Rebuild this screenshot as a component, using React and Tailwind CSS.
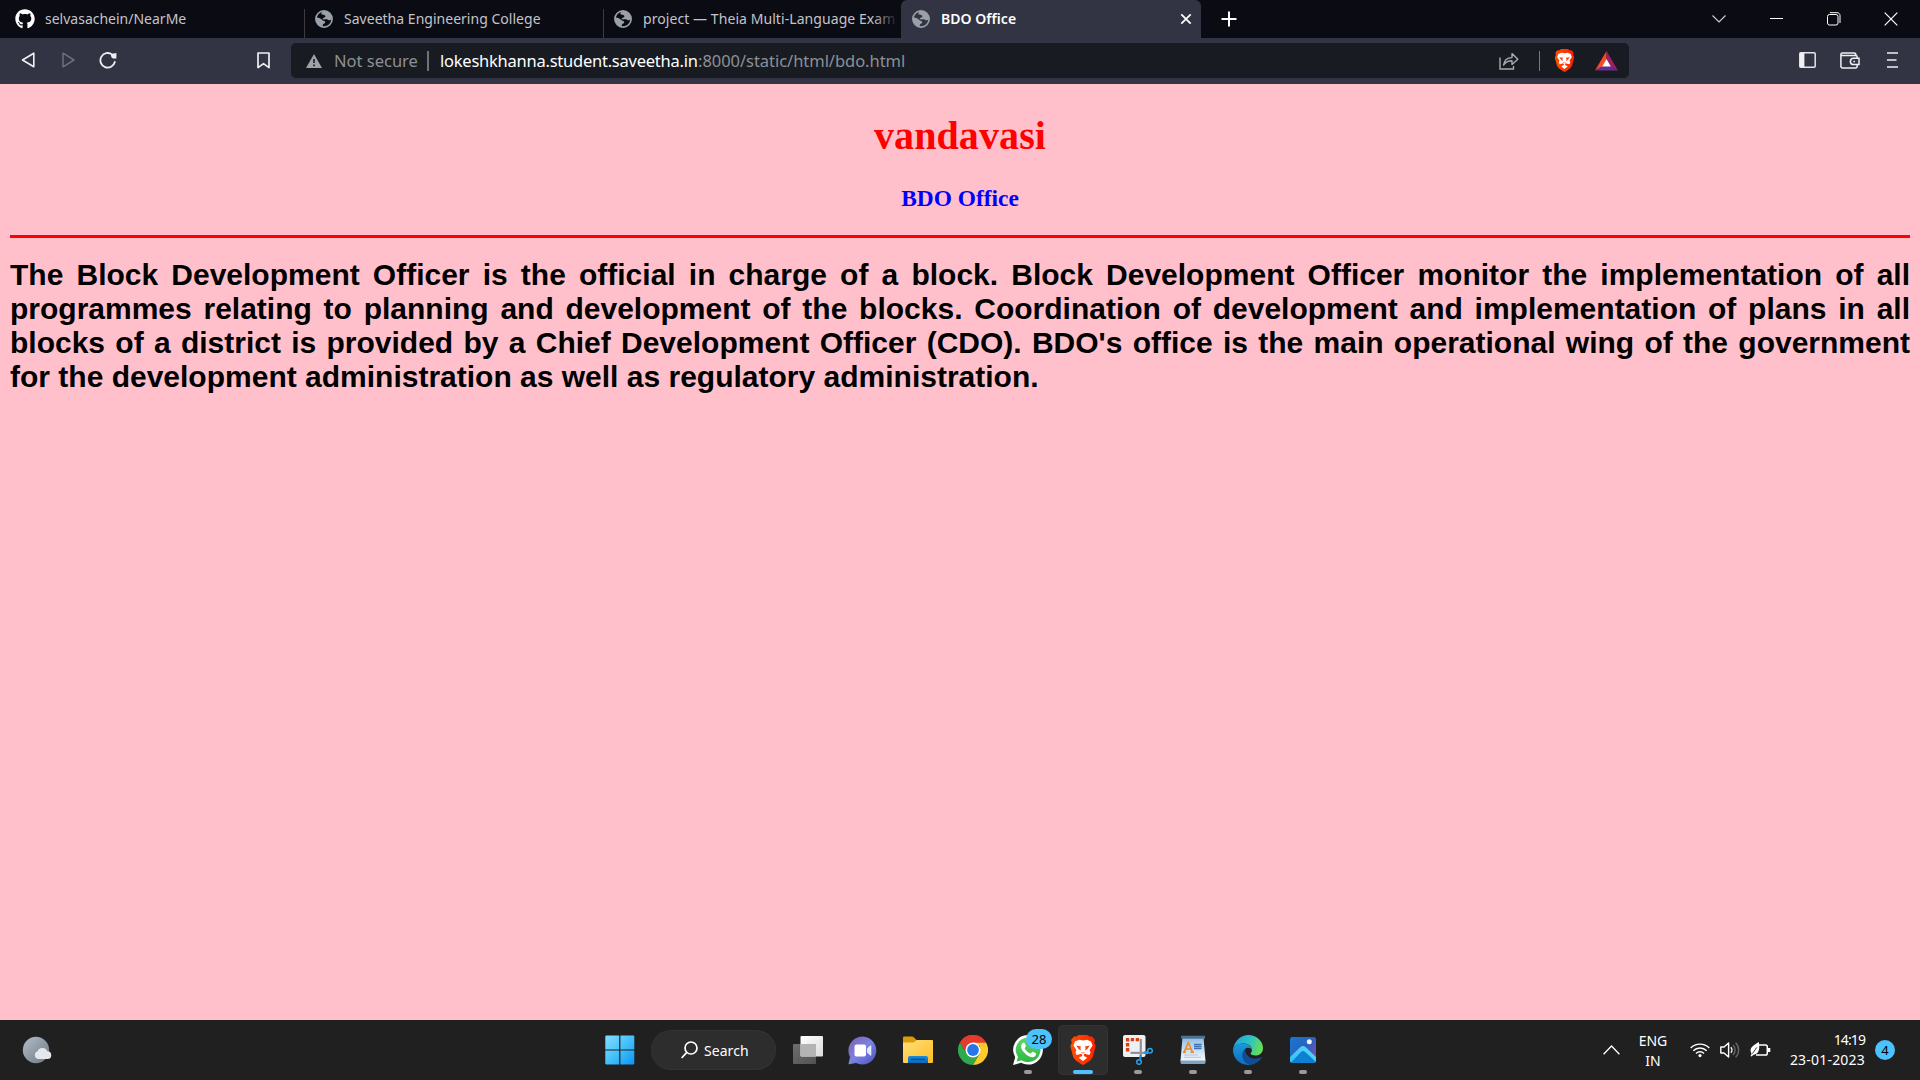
import React from "react";
import { FaGithub } from "react-icons/fa";

function Globe() {
  return (
    <svg width="18" height="18" viewBox="0 0 18 18" className="block shrink-0">
      <circle cx="9" cy="9" r="8.1" fill="none" stroke="#9aa0a8" strokeWidth="1.7" />
      <path d="M9 1 C6.5 2 5.6 3.4 6.8 4.6 C8 5.5 9.9 4.6 10.4 6.1 C10.9 7.6 8 7.4 7.6 9 C8.6 10.2 11.4 8.6 12.6 9.6 C13.4 10.8 15.6 10.4 17 9 C17.1 4 14 1 9 1 Z" fill="#9aa0a8" />
      <path d="M1 7.6 C3 7.2 5 8.4 6.8 9.4 C8 10.6 8.8 10.8 9.8 11.2 C11 12.2 9.8 13.4 8.6 13.8 C7.4 14.6 8 16.2 7.4 17 C3.8 16.4 .8 13 1 7.6 Z" fill="#9aa0a8" />
    </svg>
  );
}

function Tab({ icon, label, className, labelClass }) {
  return (
    <div className={"flex h-[29px] items-center pb-[9px] " + className}>
      {icon}
      <span className={"text-[14px] leading-5 whitespace-nowrap " + labelClass}>{label}</span>
    </div>
  );
}

function BraveLion({ width, height, id }) {
  return (
    <svg width={width} height={height} viewBox="0 0 26 30">
      <defs>
        <linearGradient id={id} x1="0" x2="1">
          <stop offset="0" stopColor="#ff5000" />
          <stop offset="1" stopColor="#ff2000" />
        </linearGradient>
      </defs>
      <path d="M6.5 1.6 L8.5 0 H17.5 L19.5 1.6 L22 1.5 L25 5 L24.2 7.4 L25.7 11 L22.8 22 L20.5 25.2 L13.8 29.8 H12.2 L5.5 25.2 L3.2 22 L.3 11 L1.8 7.4 L1 5 L4 1.5Z" fill={`url(#${id})`} />
      <path d="M9 4.8 L13 5.5 L17 4.8 L21 6.5 L22.6 10.4 L19.6 15 L20.6 17.5 L19.4 20 L16.4 19.2 L15 18.7 L13.8 19.4 V21 L17 22.4 L16.4 23.6 L13 26 L9.6 23.6 L9 22.4 L12.2 21 V19.4 L11 18.7 L9.6 19.2 L6.6 20 L5.4 17.5 L6.4 15 L3.4 10.4 L5 6.5Z" fill="#fff" />
      <path d="M6.2 10.6 L11 11.4 L10.4 13 L10.9 15.6 L8.8 14.2Z M19.8 10.6 L15 11.4 L15.6 13 L15.1 15.6 L17.2 14.2Z M10.8 16.8 L13 17.8 L15.2 16.8 L14 18.3 H12Z" fill="#fb3f0a" />
    </svg>
  );
}

function TaskItem({ children, active, open }) {
  return (
    <div className={"relative flex h-[50px] w-[50px] items-center justify-center rounded-[5px] " + (active ? "bg-[#2d2d2d] ring-1 ring-[#333] ring-inset" : "")}>
      {children}
      {open && <span className={"absolute bottom-[1px] h-1 rounded-full " + (active ? "w-5 bg-[#4cc2ff]" : "w-2 bg-[#9a9a9a]")} />}
    </div>
  );
}

function TabStrip() {
  return (
    <header className="flex h-[38px] shrink-0 bg-[#0b0b14] text-[#c3c4c8]">
      <div className="flex w-[901px] items-end">
        <Tab className="w-[304px] pl-[15px]" labelClass="ml-[10px]" icon={<FaGithub size={20} className="shrink-0 text-white" />} label="selvasachein/NearMe" />
        <Tab className="w-[299px] border-l border-[#3c3c3c] pl-[10px]" labelClass="ml-[11px] tracking-[0.02px]" icon={<Globe />} label="Saveetha Engineering College" />
        <div className="relative w-[298px]">
          <Tab className="border-l border-[#3c3c3c] pl-[10px]" labelClass="ml-[11px] tracking-[0.07px]" icon={<Globe />} label="project — Theia Multi-Language Exam" />
          <div className="absolute top-0 right-0 h-[29px] w-[28px] bg-linear-to-r from-transparent to-[#0b0b14] to-90%" />
        </div>
      </div>
      <div className="flex w-[300px] items-center rounded-t-[6px] bg-[#323443] pr-[9px] pl-[11px] text-white">
        <Globe />
        <span className="ml-[11px] text-[14px] leading-5 font-semibold tracking-[0.04px]">BDO Office</span>
        <svg className="ml-auto" width="12" height="12" viewBox="0 0 12 12"><path d="M1.3 1.3 L10.7 10.7 M10.7 1.3 L1.3 10.7" stroke="#fff" strokeWidth="1.8" /></svg>
      </div>
      <div className="flex grow items-center pl-5">
        <svg width="16" height="16" viewBox="0 0 16 16"><path d="M8 .5 V15.5 M.5 8 H15.5" stroke="#fff" strokeWidth="2" /></svg>
        <div className="ml-auto flex w-[230px] items-center justify-between pr-[22px] pl-[22px]">
          <svg width="14" height="8" viewBox="0 0 14 8"><path d="M.5 .5 L7 7 L13.5 .5" fill="none" stroke="#d0d0d2" strokeWidth="1.1" /></svg>
          <svg width="13" height="2" viewBox="0 0 13 2" className="ml-[1px]"><path d="M0 .5 H13" stroke="#fff" /></svg>
          <svg width="14" height="14" viewBox="0 0 14 14" fill="none" stroke="#fff" className="ml-[1px]"><rect x=".5" y="2.5" width="10.5" height="10.5" rx="2" /><path d="M2.8 .7 H10 C12 .7 13 2 13 3.6 V11" /></svg>
          <svg width="14" height="14" viewBox="0 0 14 14"><path d="M.7 .7 L13.3 13.3 M13.3 .7 L.7 13.3" stroke="#fff" strokeWidth="1.2" /></svg>
        </div>
      </div>
    </header>
  );
}

function Toolbar() {
  return (
    <nav className="flex h-[46px] shrink-0 items-center bg-[#323443]">
      <div className="flex w-[291px] items-center pb-[2px] pl-[21px]">
        <svg width="14" height="16" viewBox="0 0 14 16"><path d="M12.8 1.2 V14.8 L1.5 8Z" fill="none" stroke="#f0f0f2" strokeWidth="1.6" strokeLinejoin="round" /></svg>
        <svg className="ml-[27px]" width="13" height="16" viewBox="0 0 13 16"><path d="M1 1.2 V14.8 L12 8Z" fill="none" stroke="#6c6e7a" strokeWidth="1.5" strokeLinejoin="round" /></svg>
        <svg className="ml-6" width="18" height="17" viewBox="0 0 18 17"><path d="M15.8 10 A7.3 7.3 0 1 1 13 2.4" fill="none" stroke="#f0f0f2" strokeWidth="1.8" strokeLinecap="round" /><path d="M12 2 L17.4 1 V6.4 H14 A3 3 0 0 1 12 4Z" fill="#f0f0f2" /></svg>
        <svg className="ml-[140px]" width="13" height="17" viewBox="0 0 13 17"><path d="M1 1 H12 V15.6 L6.5 11.6 L1 15.6Z" fill="none" stroke="#f0f0f2" strokeWidth="1.7" strokeLinejoin="round" /></svg>
      </div>
      <div className="mb-[1px] flex h-[35px] w-[1338px] items-center rounded-[5px] bg-[#181b22] pl-[15px] text-[16.5px] leading-[22px] whitespace-nowrap">
        <svg width="16" height="14" viewBox="0 0 16 14"><path d="M8 0 L16 14 H0Z" fill="#a0a2a8" /><path d="M8 5 V9 M8 10.5 V12.3" stroke="#181b22" strokeWidth="1.6" /></svg>
        <span className="ml-3 w-[93px] text-[#8d9095]">Not secure</span>
        <span className="h-5 w-[2px] bg-[#6f7277]" />
        <span className="ml-[11px] w-[258px] tracking-[-0.24px] text-white">lokeshkhanna.student.saveetha.in</span>
        <span className="tracking-[-0.04px] text-[#8d9095]">:8000/static/html/bdo.html</span>
        <div className="ml-auto flex items-center pr-[11px]">
          <svg width="20" height="18" viewBox="0 0 20 18" fill="none" stroke="#a9abb0" strokeWidth="1.4"><path d="M1 5.5 V17 H14.5 V14" /><path d="M4.5 13 C5.2 8.5 8 5.6 13 5.6 V1.6 L18.8 7.2 L13 12.4 V8.8 C9 8.8 6.5 10 4.5 13Z" strokeLinejoin="round" /></svg>
          <span className="ml-5 h-5 w-px bg-[#777980]" />
          <span className="ml-[14px]"><BraveLion width={21} height={23} id="lionSmall" /></span>
          <svg className="ml-5" width="23" height="20" viewBox="0 0 23 20"><path d="M11.5 0 L0 19.5 L7.5 15.5 L11.5 8Z" fill="#ff4724" /><path d="M11.5 0 L23 19.5 L15.5 15.5 L11.5 8Z" fill="#9e1f63" /><path d="M0 19.5 H23 L15.5 15.2 H7.5Z" fill="#662d91" /><path d="M11.5 8 L15.8 15.4 H7.2Z" fill="#fff" /></svg>
        </div>
      </div>
      <div className="flex grow items-center justify-end pr-[22px] pb-[2px]">
        <svg width="17" height="16" viewBox="0 0 17 16"><rect x=".8" y=".8" width="15.4" height="14.4" rx="1" fill="none" stroke="#e4e4e8" strokeWidth="1.5" /><path d="M.8 .8 H5.4 V15.2 H.8Z" fill="#f0f0f2" /></svg>
        <svg className="ml-6" width="20" height="17" viewBox="0 0 20 17" fill="none" stroke="#f0f0f2" strokeWidth="1.5"><path d="M17.2 6 V5 Q17.2 3.6 15.8 3.6 H2.4 Q.9 3.6 .9 2.3 Q.9 .9 2.4 .9 H14 Q16 .9 16 3.6 M.9 2.3 V14 Q.9 16 2.9 16 H15.4 Q17.2 16 17.2 14 V12.8" /><path d="M19 6.2 H13.6 A3.2 3.2 0 0 0 13.6 12.6 H19Z" /><path d="M13.4 9.4 H15" /></svg>
        <svg className="ml-[27px]" width="11" height="16" viewBox="0 0 11 16"><path d="M0 1 H11 M0 8 H9.5 M0 15 H11" stroke="#f0f0f2" strokeWidth="1.6" /></svg>
      </div>
    </nav>
  );
}

function Page() {
  return (
    <main className="grow px-[10px] pt-[29px]">
      <h1 className="text-center font-['Liberation_Serif',serif] text-[40px] leading-[46px] font-bold tracking-[0.1px] text-[#ff0000]">vandavasi</h1>
      <h3 className="mt-[25px] text-center font-['Liberation_Serif',serif] text-[23.4px] leading-[28px] font-bold text-[#0000ff]">BDO Office</h3>
      <hr className="mt-[23px] h-[3px] border-0 bg-[#ff0000]" />
      <p className="mt-[20px] text-justify font-['Liberation_Sans',sans-serif] text-[30px] leading-[34px] font-bold text-black">
        The Block Development Officer is the official in charge of a block. Block Development Officer monitor the implementation of all programmes relating to planning and development of the blocks. Coordination of development and implementation of plans in all blocks of a district is provided by a Chief Development Officer (CDO). BDO's office is the main operational wing of the government for the development administration as well as regulatory administration.
      </p>
    </main>
  );
}

function WindowsLogo() {
  return (
    <svg width="30" height="30" viewBox="0 0 30 30">
      <defs><linearGradient id="win" x1="0" y1="0" x2="1" y2="1"><stop offset="0" stopColor="#86dcff" /><stop offset=".5" stopColor="#45c2fb" /><stop offset="1" stopColor="#0a94f5" /></linearGradient></defs>
      <path d="M1 .5 H14.2 V14.4 H.3 V1.2Z M15.4 .5 H28.6 L29.3 1.2 V14.4 H15.4Z M.3 15.6 H14.2 V29.5 H1 L.3 28.8Z M15.4 15.6 H29.3 V28.8 L28.6 29.5 H15.4Z" fill="url(#win)" />
    </svg>
  );
}

function TaskViewIcon() {
  return (
    <svg width="30" height="28" viewBox="0 0 30 28">
      <defs>
        <linearGradient id="tvFront" x1="0" y1="0" x2="1" y2="1"><stop offset="0" stopColor="#fff" /><stop offset="1" stopColor="#dcdcdc" /></linearGradient>
        <linearGradient id="tvBack" x1="0" y1="0" x2="1" y2="1"><stop offset="0" stopColor="#6e6e6e" /><stop offset="1" stopColor="#525252" /></linearGradient>
      </defs>
      <rect x="0" y="8" width="23" height="20" rx="1" fill="url(#tvBack)" />
      <rect x="7.5" y="0" width="22.5" height="20.5" rx="1" fill="url(#tvFront)" />
      <path d="M7.5 8 H23 V20.5 H8.5 Q7.5 20.5 7.5 19.5Z" fill="#b4b4b4" />
    </svg>
  );
}

function ChatIcon() {
  return (
    <svg width="29" height="29" viewBox="0 0 29 29" className="mr-[2px]">
      <defs><linearGradient id="chat" x1="0" y1="0" x2="1" y2="1"><stop offset="0" stopColor="#7d5fb0" /><stop offset=".5" stopColor="#7b83e0" /><stop offset="1" stopColor="#4b4fc4" /></linearGradient></defs>
      <path d="M14.5 .5 A14 14 0 1 1 8 27 L1.4 28.3 Q.3 28.4 .6 27.2 L2 21 A14 14 0 0 1 14.5 .5Z" fill="url(#chat)" />
      <rect x="6.5" y="8.5" width="11.5" height="12" rx="2" fill="#fff" />
      <path d="M19 12.4 L22.3 9.4 Q23.3 9 23.3 10 V19 Q23.3 20 22.3 19.6 L19 16.6Z" fill="#e8e8fa" />
    </svg>
  );
}

function ExplorerIcon() {
  return (
    <svg width="30" height="28" viewBox="0 0 30 28">
      <defs><linearGradient id="folder" x1="0" y1="0" x2="1" y2="1"><stop offset="0" stopColor="#ffe07a" /><stop offset="1" stopColor="#fdbd24" /></linearGradient><linearGradient id="tray" x1="0" y1="0" x2="0" y2="1"><stop offset="0" stopColor="#1a8be0" /><stop offset="1" stopColor="#0a68b8" /></linearGradient></defs>
      <path d="M0 1.5 Q0 .5 1 .5 H9 Q10 .5 11 1.5 L13.5 4 V9 H0Z" fill="#dc9a08" />
      <path d="M0 6.5 H10 Q11 6.5 12 5.5 L13.2 4.3 Q13.8 4 14.6 4 H29 Q30 4 30 5 V26 Q30 27 29 27 H1 Q0 27 0 26Z" fill="url(#folder)" />
      <path d="M5 27 V22 Q5 20 7 20 H23 Q25 20 25 22 V27Z" fill="url(#tray)" />
      <path d="M8 23.3 H22" stroke="#084a86" strokeWidth="1.2" />
    </svg>
  );
}

function ChromeIcon() {
  return (
    <svg width="30" height="30" viewBox="0 0 30 30">
      <path d="M2 7.5 A15 15 0 0 1 28 7.5 L22 11 H15 L8.5 18.7Z" fill="#e33b2e" />
      <path d="M2 7.5 A15 15 0 0 0 15 30 L21.4 18.7 L15 22.5 L8.5 18.7Z" fill="#2da94f" />
      <path d="M28 7.5 A15 15 0 0 1 15 30 L21.5 18.7 L22 11 L15 7.5Z" fill="#fdc92c" />
      <path d="M2 7.5 A15 15 0 0 1 28 7.5 H15 L9 12Z" fill="#e33b2e" />
      <circle cx="15" cy="15" r="7.5" fill="#fff" />
      <circle cx="15" cy="15" r="5.9" fill="#2a74ea" />
    </svg>
  );
}

function WhatsAppIcon() {
  return (
    <svg width="30" height="30" viewBox="0 0 30 30">
      <defs><linearGradient id="wa" x1="0" y1="0" x2="0" y2="1"><stop offset="0" stopColor="#62d66b" /><stop offset="1" stopColor="#2cb742" /></linearGradient></defs>
      <path d="M15.2 0 A14.8 14.8 0 1 1 8 27.8 L0 30 L2.2 22.2 A14.8 14.8 0 0 1 15.2 0Z" fill="#fff" />
      <path d="M15.2 2.5 A12.3 12.3 0 1 1 8.6 25.2 L3.8 26.4 L5 21.8 A12.3 12.3 0 0 1 15.2 2.5Z" fill="url(#wa)" />
      <path d="M10.2 7.8 C11.4 7.4 11.8 8 12.3 9.2 C12.9 10.6 13.2 11.2 12.6 12 C11.7 13 11.5 13.2 12 14 C13.3 16 14.8 17.3 16.9 18.2 C17.6 18.5 17.9 18.3 18.6 17.4 C19.3 16.5 19.6 16.6 20.5 17 C23 18.2 23.2 18.3 23.1 19 C22.9 21 21.4 22 19.8 22.2 C17.8 22.3 14.4 21 11.6 18 C9.2 15.4 8 13.2 8.1 11.4 C8.2 9.8 9 8.4 10.2 7.8Z" fill="#fff" />
    </svg>
  );
}

function SnipIcon() {
  return (
    <svg width="30" height="30" viewBox="0 0 30 30">
      <rect x="0" y="0" width="22.5" height="22" rx="2" fill="#eef0f4" />
      <path d="M4.6 16.5 V4.6 H16.5" fill="none" stroke="#d2430f" strokeWidth="3.4" strokeDasharray="3.4 1.6" />
      <path d="M17.8 4 V22 M7.5 17.8 H25" stroke="#8e9399" strokeWidth="2.2" />
      <path d="M17.8 20 L17.2 24.5 M21 17.8 L24.5 16.8" stroke="#1a90dc" strokeWidth="2.2" />
      <circle cx="16" cy="27" r="2.3" fill="none" stroke="#2aa2ee" strokeWidth="1.5" />
      <circle cx="27" cy="15.8" r="2.3" fill="none" stroke="#2aa2ee" strokeWidth="1.5" />
    </svg>
  );
}

function WordpadIcon() {
  return (
    <svg width="26" height="30" viewBox="0 0 26 30">
      <defs><linearGradient id="pad" x1="0" y1="0" x2="0" y2="1"><stop offset="0" stopColor="#8dbbe2" /><stop offset=".6" stopColor="#cfe3f3" /><stop offset="1" stopColor="#f4f8fb" /></linearGradient></defs>
      <path d="M2.5 2 H23.5 L25.5 26 H.5Z" fill="url(#pad)" />
      <path d="M1 .8 H25 V3.8 H1.3Z" fill="#4d7393" />
      <path d="M.5 25.5 H25.5 V28 L24.5 29 H1.5 L.5 28Z" fill="#7fa3c0" />
      <path d="M4 17.3 L8.3 7.5 L12.6 17.3 M5.5 14 H11.5 M3 17.2 H6 M10.5 17.2 H14" fill="none" stroke="#ee8d2d" strokeWidth="1.7" />
      <path d="M14 9.5 H21.5 M14 11.5 H21.5 M14 13.5 H21.5" stroke="#4173b5" strokeWidth="1.3" />
      <path d="M4 20 H18 M4 22.3 H21" stroke="#b9c6d2" strokeWidth="1" />
    </svg>
  );
}

function EdgeIcon() {
  return (
    <svg width="30" height="30" viewBox="0 0 30 30">
      <defs>
        <linearGradient id="edgeTop" x1="0" y1=".3" x2="1" y2=".6"><stop offset="0" stopColor="#1fa4dc" /><stop offset=".5" stopColor="#2dc3c4" /><stop offset="1" stopColor="#6be04b" /></linearGradient>
        <linearGradient id="edgeLeft" x1="0" y1="0" x2="0" y2="1"><stop offset="0" stopColor="#1c9ad8" /><stop offset="1" stopColor="#0f6ac2" /></linearGradient>
      </defs>
      <path d="M.4 12.5 C2.5 5 8.2 0 15 0 C23.5 0 30 6.2 30 13 C30 17.8 26.6 20.6 22.6 20.6 C19.8 20.6 17.6 19.8 17.6 18.6 C17.6 17.8 18.9 17.2 18.9 15 C18.9 11 15 8.6 10.5 8.6 C5.5 8.6 2.2 10 .4 12.5Z" fill="url(#edgeTop)" />
      <path d="M0 15 C0 11 4 8.4 10 8.6 C14.5 8.7 18.8 11 18.9 15 C17.5 12.4 14.2 12 12 14.2 C9.2 17 10 25 19 29.4 C8.5 32 0 24.5 0 15Z" fill="url(#edgeLeft)" />
      <path d="M12.2 14 C7 17.5 8.8 27 16.6 29.9 C21.5 29.5 26 27 28.6 22.7 C28.8 22.2 28.4 21.9 27.9 22.2 C20.5 26 12 22 12.2 14Z" fill="#104d94" />
    </svg>
  );
}

function PhotosIcon() {
  return (
    <svg width="26" height="26" viewBox="0 0 26 26">
      <defs>
        <linearGradient id="sky" x1="0" y1="0" x2="1" y2=".8"><stop offset="0" stopColor="#1679cf" /><stop offset=".55" stopColor="#2a62c0" /><stop offset="1" stopColor="#8150b0" /></linearGradient>
        <linearGradient id="hill" x1="0" y1="1" x2="1" y2="0"><stop offset="0" stopColor="#2fc0f2" /><stop offset="1" stopColor="#5ad8fb" /></linearGradient>
        <clipPath id="photoFrame"><rect width="26" height="26" rx="2.5" /></clipPath>
      </defs>
      <g clipPath="url(#photoFrame)">
        <rect width="26" height="26" fill="url(#sky)" />
        <path d="M0 26 L13 12 L26 24 V26Z" fill="#0f7fd4" />
        <path d="M-2 22 L10.5 10 Q13 8 15.5 10 L26 20 V25 L14.6 14.6 Q13 13.4 11.4 14.6 L2.5 24 L0 26Z" fill="url(#hill)" />
        <circle cx="19.3" cy="4.7" r="2.5" fill="#f3f5fa" />
      </g>
    </svg>
  );
}

function Taskbar() {
  return (
    <footer className="flex h-[60px] shrink-0 bg-[#202020] text-[14px] text-white">
      <div className="flex w-[595px] items-center pl-[22px]">
        <svg width="30" height="28" viewBox="0 0 30 28">
          <defs><linearGradient id="moon" x1="0" y1="0" x2="1" y2="1"><stop offset="0" stopColor="#b4bec8" /><stop offset="1" stopColor="#6d7781" /></linearGradient></defs>
          <circle cx="14" cy="14" r="13.2" fill="url(#moon)" />
          <path d="M16 23 A4 4 0 0 1 15.5 15.3 A5.2 5.2 0 0 1 25.2 15.2 A3.9 3.9 0 0 1 25.5 23Z" fill="#e4e8ec" />
        </svg>
      </div>
      <div className="flex w-[49px] items-center justify-center"><WindowsLogo /></div>
      <div className="mt-[10px] ml-[7px] flex h-10 w-[125px] items-center rounded-full bg-[#2d2d2d] pl-[30px] ring-1 ring-[#323232] ring-inset">
        <svg width="17" height="18" viewBox="0 0 17 18" fill="none" stroke="#fff" strokeWidth="1.7"><circle cx="10" cy="7" r="6" /><path d="M5.6 11.6 L.6 17" /></svg>
        <span className="ml-[6px] tracking-[0.05px]">Search</span>
      </div>
      <div className="ml-[7px] flex items-center gap-[5px]">
        <TaskItem><TaskViewIcon /></TaskItem>
        <TaskItem><ChatIcon /></TaskItem>
        <TaskItem><ExplorerIcon /></TaskItem>
        <TaskItem><ChromeIcon /></TaskItem>
        <TaskItem open>
          <WhatsAppIcon />
          <span className="absolute top-[4px] left-[23px] flex h-5 w-[26px] items-center justify-center rounded-full bg-[#4cc2ff] text-[13px] leading-5 text-black">28</span>
        </TaskItem>
        <TaskItem active open><BraveLion width={26} height={30} id="lionLarge" /></TaskItem>
        <TaskItem open><SnipIcon /></TaskItem>
        <TaskItem open><WordpadIcon /></TaskItem>
        <TaskItem open><EdgeIcon /></TaskItem>
        <TaskItem open><PhotosIcon /></TaskItem>
      </div>
      <div className="ml-auto flex items-center pr-[25px]">
        <svg width="17" height="10" viewBox="0 0 17 10"><path d="M.6 9.2 L8.5 1 L16.4 9.2" fill="none" stroke="#fff" strokeWidth="1.3" /></svg>
        <div className="mt-[1px] ml-[17px] w-8 text-center leading-5">ENG<br />IN</div>
        <svg className="ml-[21px]" width="20" height="16" viewBox="0 0 20 16" fill="none" stroke="#fff" strokeWidth="1.4"><path d="M.7 6 A13 13 0 0 1 19.3 6" /><path d="M3.3 8.8 A9.4 9.4 0 0 1 16.7 8.8" /><path d="M6 11.4 A5.6 5.6 0 0 1 14 11.4" /><circle cx="10" cy="13.6" r="1.6" fill="#fff" stroke="none" /></svg>
        <svg className="ml-[10px]" width="20" height="18" viewBox="0 0 20 18" fill="none" stroke="#fff" strokeWidth="1.4"><path d="M.8 6 H4 L8.6 2 V16 L4 12 H.8Z" strokeLinejoin="round" /><path d="M10.8 6.2 A4 4 0 0 1 10.8 11.8" /><path d="M13 4 A7 7 0 0 1 13 14 M15.6 1.8 A10 10 0 0 1 15.6 16.2" stroke="#666" /></svg>
        <svg className="ml-[10px]" width="21" height="16" viewBox="0 0 21 16"><path d="M9 3 H15.5 Q17.3 3 17.3 4.8 V11.2 Q17.3 13 15.5 13 H6" fill="none" stroke="#fff" strokeWidth="1.5" /><path d="M18 6 H20.3 V10 H18Z" fill="#fff" /><path d="M8.8 0 C9.8 5 9.5 11.8 4.6 12.4 C3.2 12.5 2.5 13.4 2 14.6 L.6 14 C1 13 1.3 12.5 1.6 11.8 C-1.6 6.4 3 3.4 8.8 0Z" fill="#fff" /><path d="M2.4 11.6 L6.8 5.4" stroke="#202020" strokeWidth=".9" /></svg>
        <div className="ml-[18px] w-[77px] pr-[1px] text-right leading-[20px] whitespace-nowrap">
          <div className="tracking-[-0.9px]">14:19</div>
          <div className="tracking-[0.2px]">23-01-2023</div>
        </div>
        <span className="ml-[9px] flex h-5 w-5 items-center justify-center rounded-full bg-[#4cc2ff] text-[13px] leading-5 text-black">4</span>
      </div>
    </footer>
  );
}

export default function App() {
  return (
    <div className="flex h-[1080px] w-[1920px] flex-col overflow-hidden bg-[#ffc0cb] font-['Noto_Sans','Open_Sans',sans-serif]">
      <TabStrip />
      <Toolbar />
      <Page />
      <Taskbar />
    </div>
  );
}
